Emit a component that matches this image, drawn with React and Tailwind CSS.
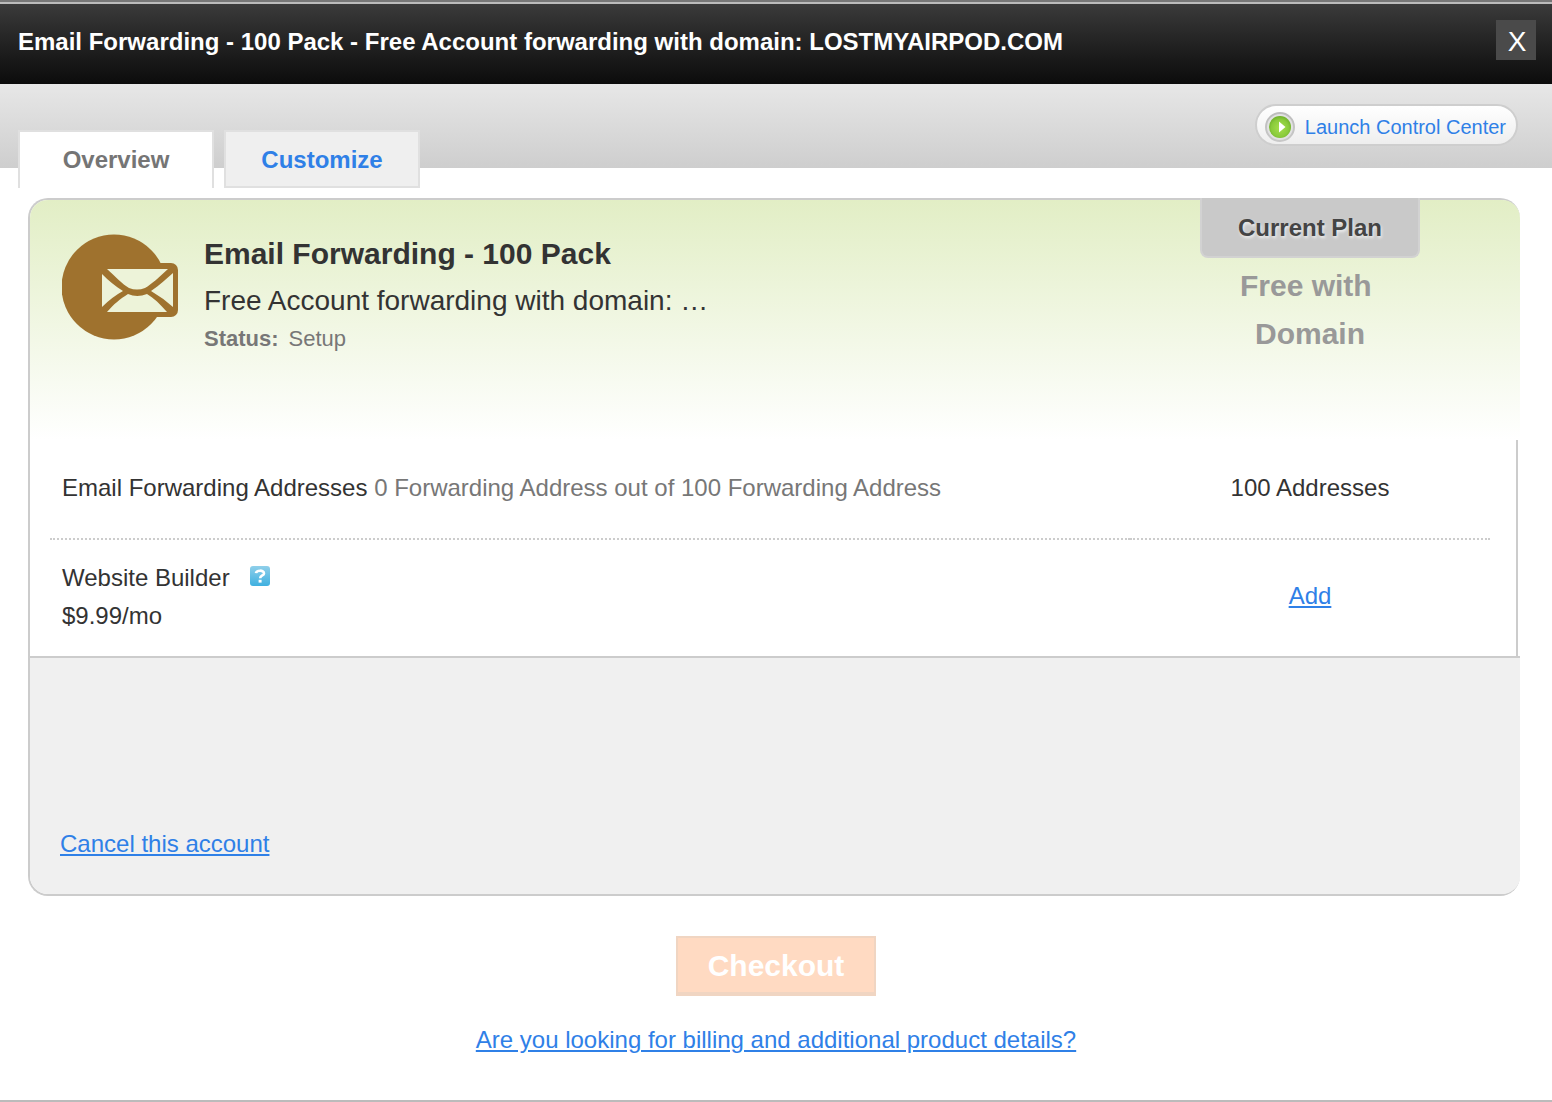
const PlayIcon = () => (
  <svg width="30" height="30" viewBox="0 0 30 30" aria-hidden="true">
    <defs>
      <linearGradient id="ring" x1="0" y1="0" x2="0" y2="1">
        <stop offset="0" stopColor="#bdbdbd" />
        <stop offset="1" stopColor="#c8c8c8" />
      </linearGradient>
      <radialGradient id="green" cx="0.5" cy="0.55" r="0.55">
        <stop offset="0" stopColor="#a6de4c" />
        <stop offset="0.7" stopColor="#8acb3c" />
        <stop offset="1" stopColor="#6fb02a" />
      </radialGradient>
    </defs>
    <circle cx="15" cy="15" r="14" fill="#e2e2e2" stroke="url(#ring)" strokeWidth="2" />
    <circle cx="15" cy="15" r="11" fill="url(#green)" />
    <path d="M14 9.5v11l6.5-5.5z" fill="#fff" />
  </svg>
);

const MailIcon = () => (
  <svg className="shrink-0" width="118" height="108" viewBox="0 0 118 108" aria-hidden="true">
    <circle cx="52" cy="53" r="52.5" fill="#9f722e" />
    <rect x="60" y="29" width="56" height="54" rx="7" fill="#9f722e" />
    <g fill="#edf3d9">
      <path d="M45 35H106C96 44 90 50 83 54Q75 57 67 54C60 50 54 43 45 35Z" />
      <path d="M40 40C47 47 53 52 61 57Q50 63 40 73Z" />
      <path d="M111 39V73Q101 64 89 57C98 51 104 45 111 39Z" />
      <path d="M45 78C52 70 58 65 66 60Q75 64 85 60C92 64 98 70 105 78Z" />
    </g>
  </svg>
);

const HelpIcon = () => (
  <svg width="20" height="20" viewBox="0 0 20 20" aria-hidden="true">
    <defs>
      <linearGradient id="help" x1="0" y1="0" x2="0" y2="1">
        <stop offset="0" stopColor="#8fcfea" />
        <stop offset="1" stopColor="#3fb0e0" />
      </linearGradient>
    </defs>
    <rect width="20" height="20" rx="3" fill="url(#help)" />
    <path
      d="M6 7.2C6.4 4 14 3.6 14 7.4C14 9.6 10.2 9.4 10.2 12.2"
      fill="none"
      stroke="#fff"
      strokeWidth="2.6"
    />
    <rect x="8.6" y="13.8" width="3" height="2.8" fill="#fff" />
  </svg>
);

const App = () => {
  return (
    <div className="bg-white border-b-2 border-[#bbbbbb] font-['Liberation_Sans',Arial,sans-serif] text-2xl text-[#333333]">
      <header className="flex items-start justify-between h-[84px] pl-[18px] pr-4 pt-4 border-t-2 border-[#777777] bg-linear-to-b from-[#3c3c3c] to-[#0c0c0c] shadow-[inset_0_2px_0_#bbbbbb]">
        <h1 className="font-bold text-white leading-12">
          Email Forwarding - 100 Pack - Free Account forwarding with domain: LOSTMYAIRPOD.COM
        </h1>
        <button className="w-10 h-10 mt-[2px] pl-[2px] bg-[#4a4a4a] text-white text-[28px] leading-[44px]" aria-label="Close">
          X
        </button>
      </header>

      <div className="flex justify-between h-[84px] pl-[18px] pr-[34px] bg-linear-to-b from-[#e7e7e7] to-[#cecece]">
        <nav className="flex gap-[10px] mt-[46px] h-[58px] font-bold">
          <button className="w-[196px] border-2 border-b-0 border-[#e0e0e0] bg-white text-[#757575]">
            Overview
          </button>
          <button className="w-[196px] pt-[2px] border-2 border-[#e0e0e0] bg-[#efefef] text-[#2f80e7]">
            Customize
          </button>
        </nav>
        <a
          href="#launch"
          className="flex items-center gap-[10px] h-[42px] mt-5 pl-2 pr-[10px] pt-1 border-2 border-[#cecece] rounded-full bg-linear-to-b from-white to-[#eeeeee] text-xl text-[#2f80e7]"
        >
          <PlayIcon />
          Launch Control Center
        </a>
      </div>

      <main className="pt-[30px] pb-11">
        <section className="ml-7 mr-8 border-2 border-r-0 border-[#cccccc] rounded-[20px]">
          <div className="flex justify-between h-60 pl-8 pr-[100px] rounded-t-[18px] bg-linear-to-b from-[#e2eec5] to-white">
            <div className="flex gap-6 pt-[34px]">
              <MailIcon />
              <div>
                <h2 className="text-[30px] font-bold leading-10">Email Forwarding - 100 Pack</h2>
                <p className="mt-2 text-[28px] leading-[38px]">Free Account forwarding with domain: …</p>
                <p className="text-[22px] leading-[38px] text-[#777777]">
                  <strong className="mr-[10px]">Status:</strong>
                  Setup
                </p>
              </div>
            </div>
            <div className="w-[220px] text-center font-bold">
              <div className="h-[60px] -mt-[2px] rounded-b-lg border-2 border-t-0 border-[#d2d2d2] bg-[#c9c9c9] leading-[60px] text-[#444444] [text-shadow:1px_2px_3px_#eeeeee]">
                Current Plan
              </div>
              <p className="mt-1 text-[30px] leading-12 text-[#999999]">
                Free with&nbsp;
                <br />
                Domain
              </p>
            </div>
          </div>

          <div className="mr-[2px] pl-5 pr-[26px] border-r-2 border-[#cccccc]">
            <table className="w-full border-separate border-spacing-0">
              <tbody>
                <tr className="h-[100px]">
                  <th scope="row" className="px-3 pb-[2px] text-left font-normal border-b-2 border-dotted border-[#cccccc]">
                    Email Forwarding Addresses{' '}
                    <span className="text-[#777777]">0 Forwarding Address out of 100 Forwarding Address</span>
                  </th>
                  <td className="w-[360px] pb-[2px] text-center border-b-2 border-dotted border-[#cccccc]">
                    100 Addresses
                  </td>
                </tr>
                <tr className="h-[116px]">
                  <th scope="row" className="px-3 pb-[2px] text-left font-normal leading-[38px]">
                    <div className="flex items-center gap-5">
                      Website Builder
                      <button className="pb-1" aria-label="Help">
                        <HelpIcon />
                      </button>
                    </div>
                    <div>$9.99/mo</div>
                  </th>
                  <td className="pb-1 text-center">
                    <a href="#add" className="text-[#2f80e7] underline">Add</a>
                  </td>
                </tr>
              </tbody>
            </table>
          </div>

          <div className="flex items-end h-[238px] pl-[30px] pb-[34px] border-t-2 border-[#cccccc] rounded-b-[18px] bg-[#f0f0f0]">
            <a href="#cancel" className="text-[#2f80e7] underline">Cancel this account</a>
          </div>
        </section>

        <div className="flex flex-col items-center gap-7 mt-10">
          <button className="w-[200px] h-[60px] pt-[2px] border-2 border-b-4 border-[#f0d5c2] bg-[#ffdac2] text-[30px] font-bold text-white">
            Checkout
          </button>
          <a href="#details" className="text-[#2f80e7] underline">
            Are you looking for billing and additional product details?
          </a>
        </div>
      </main>
    </div>
  );
};

export default App;
